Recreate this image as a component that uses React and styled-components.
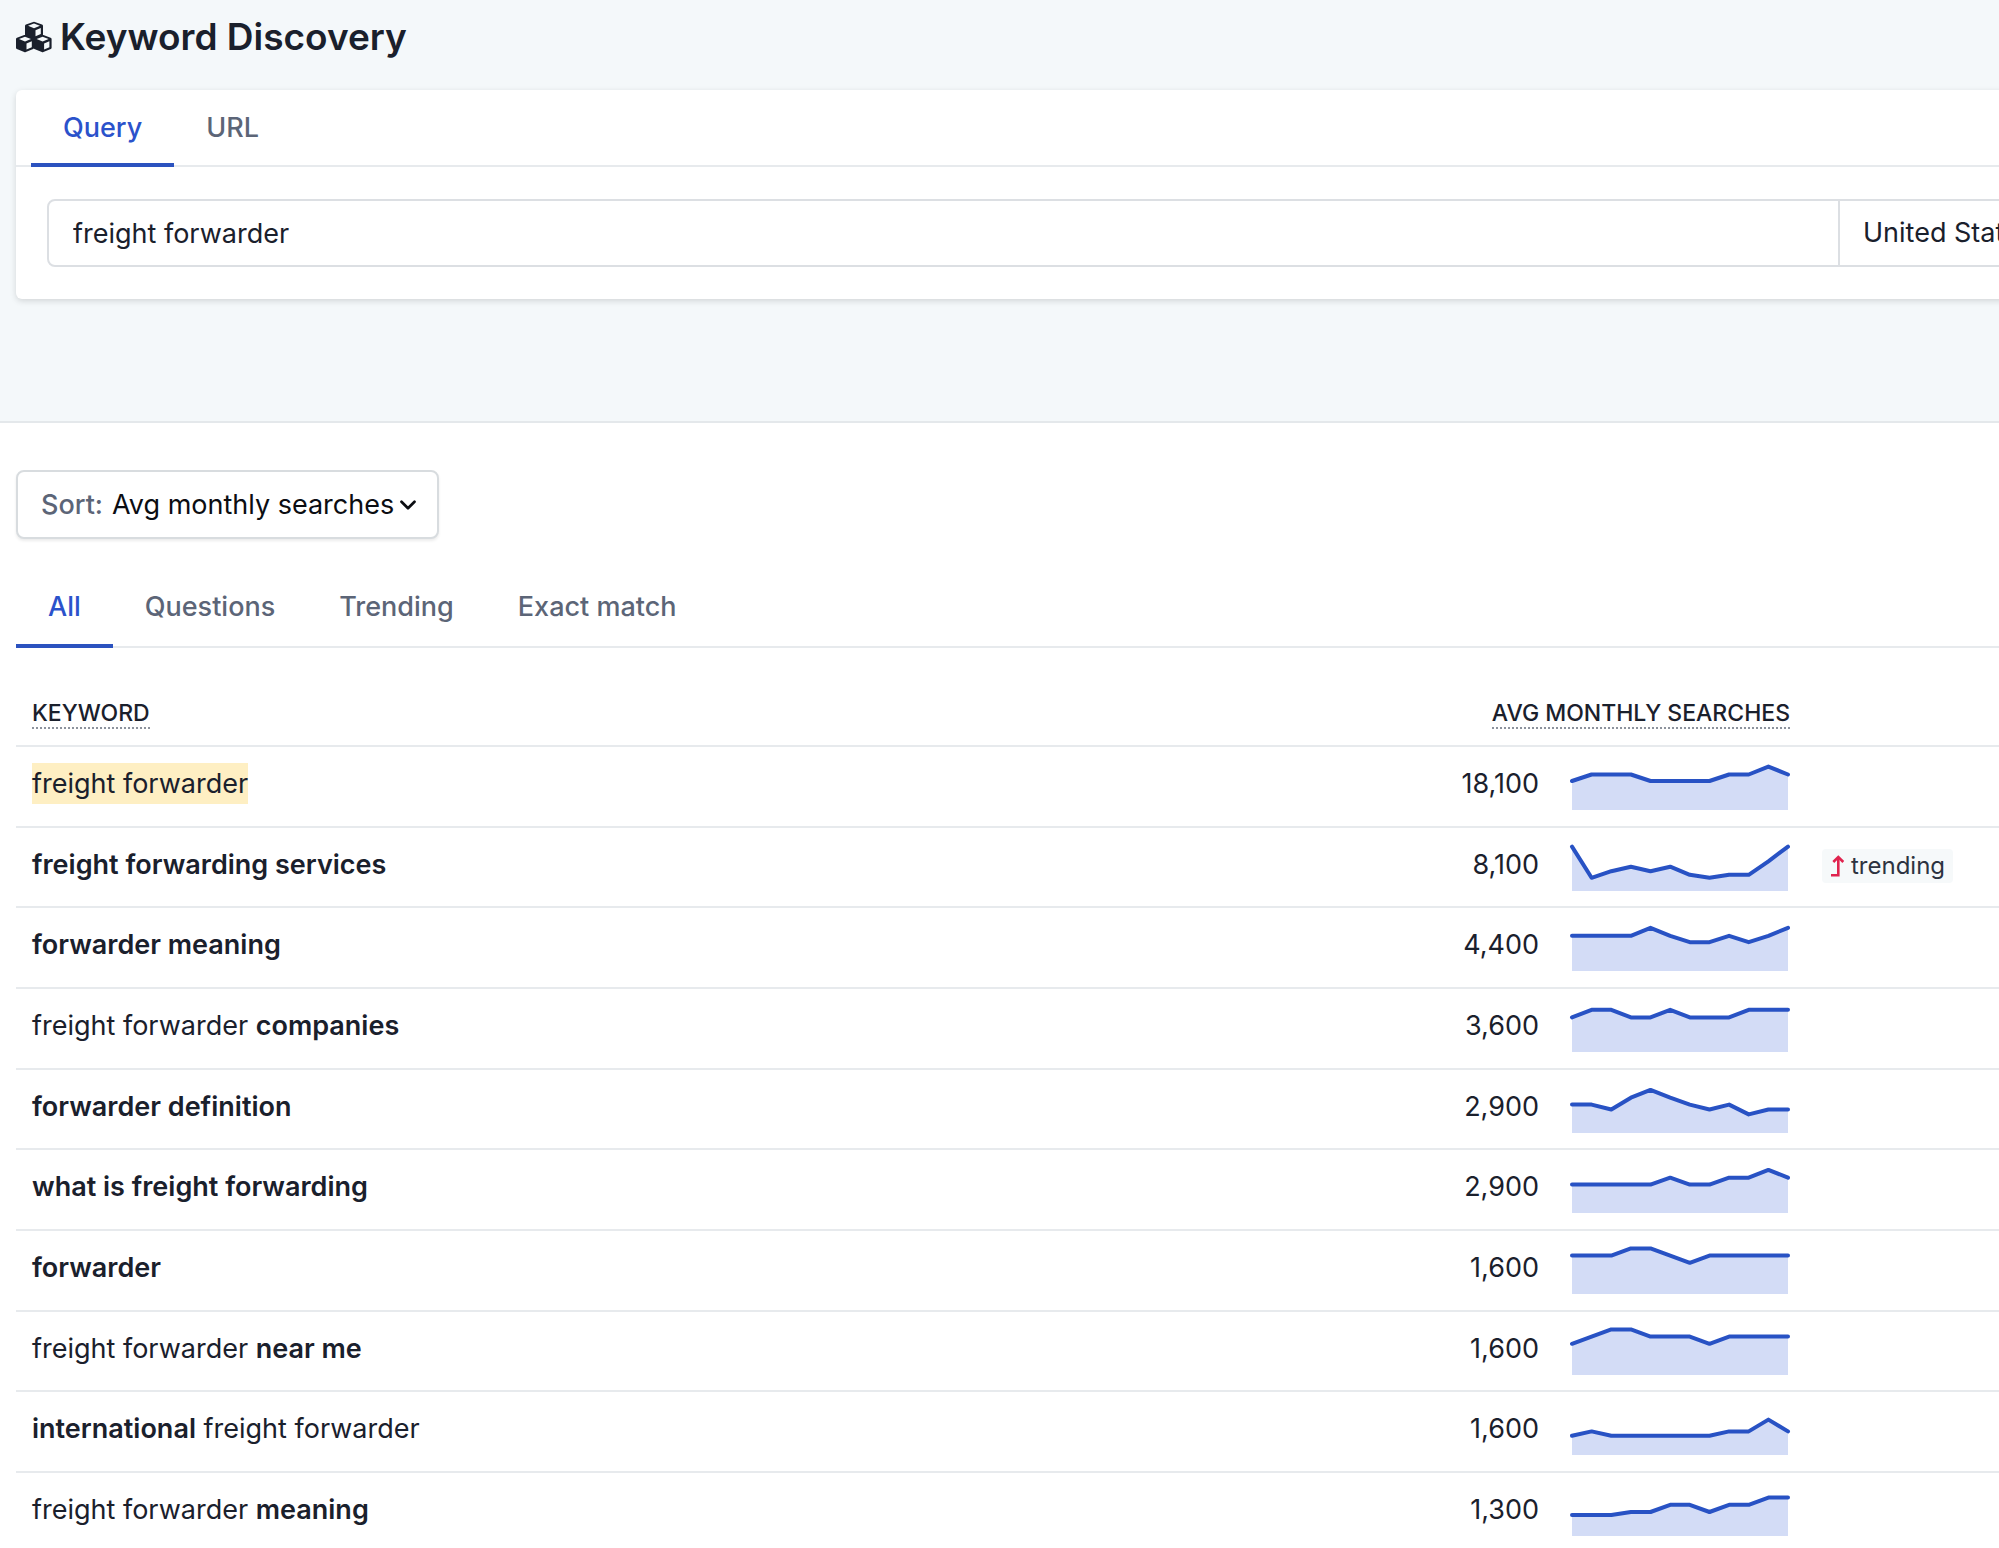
import React, { useState } from "react";
import styled, { createGlobalStyle } from "styled-components";
import { FiChevronDown } from "react-icons/fi";

const GlobalStyle = createGlobalStyle`
  * {
    box-sizing: border-box;
  }

  body {
    margin: 0;
    background: #fff;
    color: #1a202c;
    font-family: Inter, "Liberation Sans", sans-serif;
    font-size: 27px;
    line-height: 40px;
  }

  button, input, select {
    font: inherit;
    color: inherit;
  }
`;

const Page = styled.div`
  height: 100vh;
  overflow: hidden;
`;

const Hero = styled.header`
  padding: 17px 0 122px 16px;
  background: #f4f8fa;
  border-bottom: 2px solid #e4e8eb;
`;

const Title = styled.h1`
  display: flex;
  align-items: center;
  gap: 8px;
  margin: 0 0 33px;
  font-size: 37px;
  line-height: 40px;
  font-weight: 600;
`;

/* the card is wider than the window, the country select runs off the right */
const Card = styled.section`
  width: calc(100% + 240px);
  padding-bottom: 32px;
  background: #fff;
  border-radius: 6px;
  box-shadow: 0 2px 6px rgba(0, 0, 0, 0.14);
`;

const Tabs = styled.nav`
  display: flex;
  padding-left: ${(props) => (props.$inset ? "15px" : "0")};
  box-shadow: inset 0 -2px 0 #e7eaed;
`;

const Tab = styled.button`
  height: ${(props) => (props.$tall ? "80px" : "77px")};
  padding: 2px 32px 0;
  border: 0;
  border-bottom: 4px solid ${(props) => (props.$active ? "#2b52bf" : "transparent")};
  background: none;
  color: ${(props) => (props.$active ? "#2b52cb" : "#5c6577")};
  font-weight: 500;
  cursor: pointer;
`;

const SearchForm = styled.form`
  display: flex;
  margin: 32px 31px 0;
  border: 2px solid #dcdfe3;
  border-radius: 8px;
`;

const QueryInput = styled.input`
  flex: 1;
  min-width: 0;
  height: 64px;
  padding: 0 24px;
  border: 0;
  background: none;
  outline: none;
`;

const CountrySelect = styled.select`
  width: 368px;
  padding: 0 23px;
  border: 0;
  border-left: 2px solid #dcdfe3;
  background: none;
  appearance: none;
`;

const Results = styled.main`
  padding: 47px 0 0 16px;
`;

const SortButton = styled.button`
  display: flex;
  align-items: center;
  height: 69px;
  padding: 0 16px 0 23px;
  margin-bottom: 29px;
  border: 2px solid #d8dcdf;
  border-radius: 8px;
  background: #fff;
  box-shadow: 0 2px 3px rgba(0, 0, 0, 0.08);
  color: #0b0d12;
  cursor: pointer;

  span {
    margin-right: 9px;
    color: #5c6577;
    font-weight: 500;
  }

  svg {
    width: 26px;
    height: 26px;
    margin-left: 1px;
    stroke-width: 2.5px;
  }
`;

const Table = styled.table`
  width: 100%;
  margin-top: 35px;
  border-collapse: separate;
  border-spacing: 0;
  table-layout: fixed;
`;

const Th = styled.th`
  width: ${(props) => props.$width || "auto"};
  height: 64px;
  padding: 0 16px 2px;
  border-bottom: 2px solid #e7eaed;
  font-size: 23px;
  line-height: 28px;
  font-weight: 500;
  text-align: ${(props) => (props.$right ? "right" : "left")};
  text-transform: uppercase;
  white-space: nowrap;

  span {
    border-bottom: 2px dotted #8d939d;
  }
`;

const Tr = styled.tr`
  height: 81px;

  &:nth-child(3n + 2) {
    height: 80px;
  }
`;

const Td = styled.td`
  padding: 15px 16px 0;
  border-bottom: 2px solid #e7eaed;
  line-height: 44px;
  vertical-align: top;
`;

const Keyword = styled.span`
  padding: 4px 0;
  background: ${(props) => (props.$seed ? "#feefc3" : "none")};

  b {
    font-weight: 600;
  }
`;

const Volume = styled.div`
  display: flex;
  justify-content: flex-end;
  gap: 31px;
`;

const Spark = styled.svg`
  width: 220px;
  height: 48px;
  overflow: visible;
`;

const Badge = styled.span`
  display: flex;
  align-items: center;
  gap: 7px;
  width: fit-content;
  height: 34px;
  margin-top: 6px;
  padding: 0 8px;
  border-radius: 4px;
  background: #f6f9fa;
  color: #2d3340;
  font-size: 24px;
  line-height: 34px;
`;

const rows = [
  {
    parts: [["freight forwarder"]],
    seed: true,
    searches: "18,100",
    max: 30000,
    trend: [18100, 22200, 22200, 22200, 18100, 18100, 18100, 18100, 22200, 22200, 27100, 22200],
  },
  {
    parts: [["freight forwarding services", true]],
    searches: "8,100",
    trending: true,
    max: 16000,
    trend: [14800, 4400, 6600, 8100, 6600, 8100, 5400, 4400, 5400, 5400, 9900, 14800],
  },
  {
    parts: [["forwarder meaning", true]],
    searches: "4,400",
    max: 6000,
    trend: [4400, 4400, 4400, 4400, 5400, 4400, 3600, 3600, 4400, 3600, 4400, 5400],
  },
  {
    parts: [["freight forwarder "], ["companies", true]],
    searches: "3,600",
    max: 5000,
    trend: [3600, 4400, 4400, 3600, 3600, 4400, 3600, 3600, 3600, 4400, 4400, 4400],
  },
  {
    parts: [["forwarder definition", true]],
    searches: "2,900",
    max: 4900,
    trend: [2900, 2900, 2400, 3600, 4400, 3600, 2900, 2400, 2900, 1900, 2400, 2400],
  },
  {
    parts: [["what is freight forwarding", true]],
    searches: "2,900",
    max: 4900,
    trend: [2900, 2900, 2900, 2900, 2900, 3600, 2900, 2900, 3600, 3600, 4400, 3600],
  },
  {
    parts: [["forwarder", true]],
    searches: "1,600",
    max: 2000,
    trend: [1600, 1600, 1600, 1900, 1900, 1600, 1300, 1600, 1600, 1600, 1600, 1600],
  },
  {
    parts: [["freight forwarder "], ["near me", true]],
    searches: "1,600",
    max: 2000,
    trend: [1300, 1600, 1900, 1900, 1600, 1600, 1600, 1300, 1600, 1600, 1600, 1600],
  },
  {
    parts: [["international", true], [" freight forwarder"]],
    searches: "1,600",
    max: 3250,
    trend: [1300, 1600, 1300, 1300, 1300, 1300, 1300, 1300, 1600, 1600, 2400, 1600],
  },
  {
    parts: [["freight forwarder "], ["meaning", true]],
    searches: "1,300",
    max: 2000,
    trend: [880, 880, 880, 1000, 1000, 1300, 1300, 1000, 1300, 1300, 1600, 1600],
  },
];

const Sparkline = ({ values, max }) => {
  const step = 216 / (values.length - 1);
  const points = values
    .map((v, i) => `${(2 + i * step).toFixed(1)},${(48 - (v / max) * 48).toFixed(1)}`)
    .join(" ");

  return (
    <Spark viewBox="0 0 220 48" aria-hidden="true">
      <polygon points={`2,48 ${points} 218,48`} fill="#d3dcf6" />
      <polyline
        points={points}
        fill="none"
        stroke="#2852c4"
        strokeWidth="4"
        strokeLinecap="round"
        strokeLinejoin="round"
      />
    </Spark>
  );
};

// one cube: outline and left face solid, top and right face cut out
const cube =
  "M8.2 .4Q9 0 9.8 .4L17 3Q18 3.4 18 4.4V13Q18 13.9 17.2 14.3L9.8 17.3Q9 17.7 8.2 17.3L.8 14.3Q0 13.9 0 13V4.4Q0 3.4 1 3Z" +
  "M9 2L3 4.3L9 6.7L15 4.3Z" +
  "M10.5 8.7V14.8L15.8 12.5V6.5Z";

const CubesIcon = () => (
  <svg width="36" height="32" viewBox="0 0 36 32" fill="currentColor" fillRule="evenodd" aria-hidden="true">
    <path d={cube} transform="translate(9 0.5)" />
    <path d={cube} transform="translate(0 13.7)" />
    <path d={cube} transform="translate(17.6 13.7)" />
  </svg>
);

const TrendIcon = () => (
  <svg width="14" height="22" viewBox="0 0 14 22" fill="none" stroke="#e0234e" strokeWidth="2.6" aria-hidden="true">
    <path d="M1 20.3H8.3V2.5" />
    <path d="M3.3 7 8.3 2 13.3 7" />
  </svg>
);

const filters = ["All", "Questions", "Trending", "Exact match"];

const App = () => {
  const [mode, setMode] = useState("Query");
  const [filter, setFilter] = useState("All");
  const [query, setQuery] = useState("freight forwarder");

  return (
    <Page>
      <GlobalStyle />

      <Hero>
        <Title>
          <CubesIcon />
          Keyword Discovery
        </Title>

        <Card>
          <Tabs $inset>
            {["Query", "URL"].map((name) => (
              <Tab key={name} type="button" $active={mode === name} onClick={() => setMode(name)}>
                {name}
              </Tab>
            ))}
          </Tabs>

          <SearchForm onSubmit={(e) => e.preventDefault()}>
            <QueryInput
              aria-label="Query"
              value={query}
              onChange={(e) => setQuery(e.target.value)}
            />
            <CountrySelect aria-label="Country" defaultValue="us">
              <option value="us">United States</option>
            </CountrySelect>
          </SearchForm>
        </Card>
      </Hero>

      <Results>
        <SortButton type="button">
          <span>Sort:</span>
          Avg monthly searches
          <FiChevronDown />
        </SortButton>

        <Tabs>
          {filters.map((name) => (
            <Tab key={name} type="button" $tall $active={filter === name} onClick={() => setFilter(name)}>
              {name}
            </Tab>
          ))}
        </Tabs>

        <Table>
          <thead>
            <tr>
              <Th><span>Keyword</span></Th>
              <Th $right $width="400px"><span>Avg monthly searches</span></Th>
              <Th $width="193px" aria-label="Trend" />
            </tr>
          </thead>

          <tbody>
            {rows.map((row, i) => (
              <Tr key={i}>
                <Td>
                  <Keyword $seed={row.seed}>
                    {row.parts.map(([text, bold], j) =>
                      bold ? <b key={j}>{text}</b> : <React.Fragment key={j}>{text}</React.Fragment>
                    )}
                  </Keyword>
                </Td>
                <Td>
                  <Volume>
                    {row.searches}
                    <Sparkline values={row.trend} max={row.max} />
                  </Volume>
                </Td>
                <Td>
                  {row.trending && (
                    <Badge>
                      <TrendIcon />
                      trending
                    </Badge>
                  )}
                </Td>
              </Tr>
            ))}
          </tbody>
        </Table>
      </Results>
    </Page>
  );
};

export default App;
